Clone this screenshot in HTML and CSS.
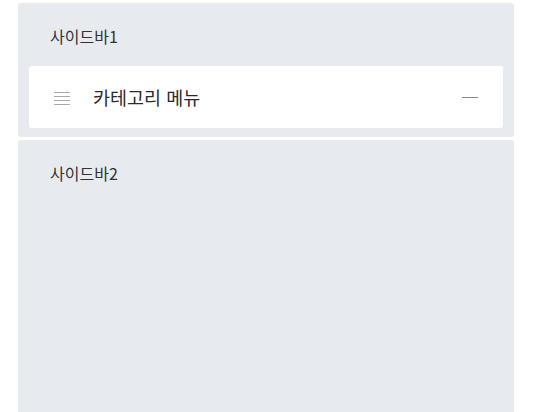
FILE: index.html
```html
<!DOCTYPE html>
<html lang="ko">
<head>
<meta charset="utf-8">
<link rel="stylesheet" href="styles.css">
</head>
<body>
<div class="layout">
  <section class="panel">
    <div class="panel-title">사이드바1</div>
    <div class="card">
      <svg class="handle" width="16" height="14" viewBox="0 0 16 14">
        <g stroke="#a8a8a8" stroke-width="1">
          <line x1="0" y1="1.5" x2="16" y2="1.5"/>
          <line x1="0" y1="5.5" x2="16" y2="5.5"/>
          <line x1="0" y1="9.5" x2="16" y2="9.5"/>
          <line x1="0" y1="13.5" x2="16" y2="13.5"/>
        </g>
      </svg>
      <span class="card-label">카테고리 메뉴</span>
      <span class="minus"></span>
    </div>
  </section>
  <section class="panel panel-2">
    <div class="panel-title">사이드바2</div>
  </section>
</div>
</body>
</html>
```
FILE: styles.css
```css
html, body {
  margin: 0;
  padding: 0;
  background: #ffffff;
  font-family: "Noto Sans CJK KR", "Noto Sans", sans-serif;
  color: #333333;
}
.layout {
  width: 496px;
  padding: 3px 0 0 18px;
  display: flex;
  flex-direction: column;
  gap: 3px;
}
.panel {
  background: #e7ebef;
  border-radius: 3px;
  padding: 0 11px 9px;
}
.panel-title {
  padding: 23px 0 0 21px;
  height: 40px;
  line-height: 20px;
  font-size: 16px;
  color: #333;
}
.card {
  background: #ffffff;
  height: 62px;
  border-radius: 2px;
  display: flex;
  align-items: center;
  padding: 0 25px 0 25px;
  box-shadow: 0 0 1px rgba(0,0,0,0.06);
}
.handle {
  flex: none;
  margin-top: 2px;
}
.card-label {
  margin-left: 23px;
  font-size: 18.5px;
  color: #2b2b2b;
  flex: 1;
}
.minus {
  width: 16px;
  height: 1px;
  background: #8a8a8a;
}
.panel-2 {
  height: 272px;
}
```
